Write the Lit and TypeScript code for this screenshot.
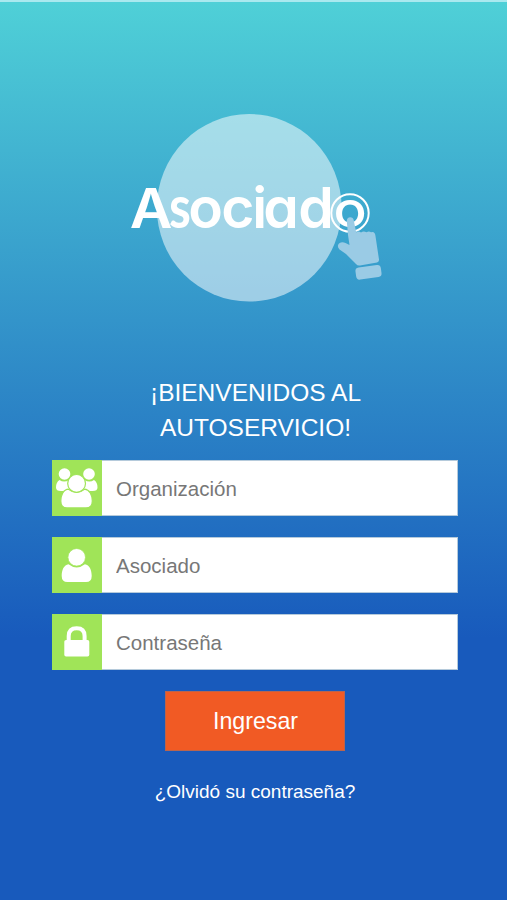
import { LitElement, html, css, svg } from "lit";
import { customElement } from "lit/decorators.js";

const groupIcon = svg`<svg viewBox="0 0 50 56">
  <g fill="#fff">
    <circle cx="12.500" cy="14" r="5.800"/><circle cx="37" cy="14" r="5.800"/>
    <path d="M7.500 20Q12 23 17 20L21 31L9 31Q4 31 4 27.500Q4 22 7.500 20Z"/>
    <path d="M42 20Q37.500 23 32.500 20L28.500 31L40.500 31Q45.500 31 45.500 27.500Q45.500 22 42 20Z"/>
  </g>
  <g fill="#fff" stroke="#a0e458" stroke-width="1.200">
    <path d="M16.500 29.200Q24.500 35.500 32.500 29.200C37.500 29.500 40.300 35 40.300 41Q40.300 47.900 34 47.900H15Q8.800 47.900 8.800 41C8.800 35 11.500 29.500 16.500 29.200Z"/>
    <circle cx="24.600" cy="23.400" r="8.900"/>
  </g>
</svg>`;

const personIcon = svg`<svg viewBox="0 0 50 56">
  <path fill="#fff" d="M16.500 27.300Q24.700 33.700 32.900 27.300C37.500 28 39.700 33 39.700 39Q39.700 45 34 45H15.500Q9.700 45 9.700 39C9.700 33 12 28 16.500 27.300Z"/>
  <circle cx="24.700" cy="20.300" r="8.800" fill="#fff" stroke="#a0e458" stroke-width=".8"/>
</svg>`;

const lockIcon = svg`<svg viewBox="0 0 50 56">
  <path d="M16.700 27V22Q16.700 14.200 24.700 14.200Q32.600 14.200 32.600 22V27" fill="none" stroke="#fff" stroke-width="4"/>
  <rect x="12.300" y="26" width="25" height="16.500" rx="1.800" fill="#fff"/>
</svg>`;

@customElement("brand-logo")
class BrandLogo extends LitElement {
  static styles = css`
    :host { display: block; width: 270px; height: 210px; }
    svg { display: block; }
    .word { font: 600 57px Inter, sans-serif; font-feature-settings: "cv11" 1; fill: #fff; }
    .slim { font-family: Lato, sans-serif; font-size: 60px; font-weight: 700; }
    .last { font-size: 50px; font-weight: 500; }
  `;
  render() {
    return html`<svg width="270" height="210" viewBox="120 100 270 210">
      <ellipse cx="249.200" cy="207.800" rx="92.400" ry="93.800" fill="#fff" fill-opacity=".52"/>
      <text class="word" transform="translate(129.800 228.300) scale(1.03 .96)">A</text>
      <text class="word slim" transform="translate(169 228.300) scale(.83 1)">s</text>
      <text class="word" y="228.300" x="188.300 221.300 252.300 263.300 298.300">ociad</text>
      <text class="word last" text-anchor="middle" transform="translate(350 226.700) scale(1.1 1)">o</text>
      <circle cx="350" cy="213" r="18.700" fill="none" stroke="#fff" stroke-width="2"/>
      <g fill="#9acbe5">
        <path d="M346.800 221Q347 217.300 350.200 217.300Q353.200 217.300 353.800 220.500L356.200 232.500Q358.500 230.500 361 232.500Q363.500 230.500 366.500 232.300Q369 230.500 371 232.300Q374.700 230.800 375.400 235.500L379 259.500Q379.300 262 377 262.400L360 265.500Q357.500 266 356 264L346 254L339.500 249.500Q336.500 246 339 243.500Q342 241.300 345.500 243L349.500 245L348 235Z"/>
        <rect x="355.700" y="266.200" width="25.600" height="12.200" rx="3.600" transform="rotate(-8 368.500 272.300)"/>
      </g>
    </svg>`;
  }
}

@customElement("app-root")
class AppRoot extends LitElement {
  static styles = css`
    :host {
      display: flex; flex-direction: column; align-items: center; box-sizing: border-box;
      width: 507px; height: 900px; overflow: hidden; padding-top: 98px;
      border-top: 2px solid #a9e9ef; color: #fff;
      background: linear-gradient(#4fd0d7 0, #3394ca 318px, #185abc 636px);
      font-family: "Liberation Sans", Arial, sans-serif;
    }
    brand-logo { margin-left: 3px; }
    h1 { margin: 65px 0 0 4px; font-size: 24.500px; font-weight: 400; line-height: 35px; text-align: center; }
    form { display: flex; flex-direction: column; align-items: center; gap: 20.500px; margin-top: 14.500px; margin-left: 3px; }
    .field { display: flex; box-sizing: border-box; width: 406px; height: 56.500px; border: 1px solid #b5cadb; background: #fff; }
    .icon { width: 50px; height: 56.500px; margin: -1px 0 -1px -1px; background: #a0e458; flex: none; }
    .icon svg { display: block; width: 50px; height: 56px; }
    input { flex: 1; min-width: 0; border: 0; outline: 0; padding: 2px 14px 0; background: transparent; font: 20.500px "Liberation Sans", Arial, sans-serif; }
    input::placeholder { color: #777; opacity: 1; }
    button { width: 180px; height: 60.500px; border: 1px solid #b8654f; background: #f15a24; color: #fff; font: 23.200px "Liberation Sans", Arial, sans-serif; padding: 1px 0 0 1px; }
    a { margin-top: 29.500px; margin-left: 3px; font-size: 19px; line-height: 22px; }
  `;
  render() {
    const fields = [
      { label: "Organización", icon: groupIcon, type: "text" },
      { label: "Asociado", icon: personIcon, type: "text" },
      { label: "Contraseña", icon: lockIcon, type: "password" },
    ];
    return html`
      <brand-logo></brand-logo>
      <h1>¡BIENVENIDOS AL<br>AUTOSERVICIO!</h1>
      <form>
        ${fields.map((f) => html`<label class="field">
          <span class="icon">${f.icon}</span><input type=${f.type} placeholder=${f.label}>
        </label>`)}
        <button type="button">Ingresar</button>
      </form>
      <a>¿Olvidó su contraseña?</a>`;
  }
}
